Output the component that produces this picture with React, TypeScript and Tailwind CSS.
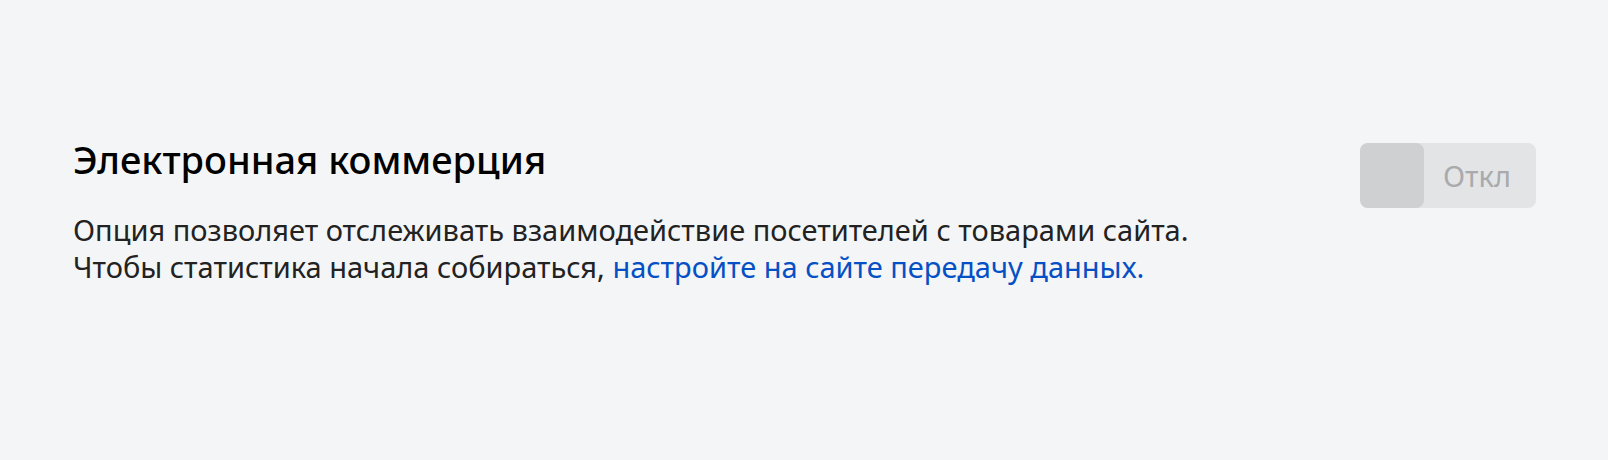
export default function App() {
  return (
    <div
      className="w-[1608px] h-[460px] bg-[#f4f5f7] flex justify-between items-start pl-[73px] pr-[72px] pt-[137px]"
      style={{ fontFamily: '"Noto Sans", Inter, sans-serif' }}
    >
      <div className="flex flex-col">
        <div className="text-[38px] leading-[44px] font-medium text-black">Электронная коммерция</div>
        <div className="mt-[30px] text-[29px] leading-[37px] text-[#222]">
          <div>Опция позволяет отслеживать взаимодействие посетителей с товарами сайта.</div>
          <div>
            Чтобы статистика начала собираться,{" "}
            <a className="text-[#0550c4]" href="#">настройте на сайте передачу данных.</a>
          </div>
        </div>
      </div>
      <div className="mt-[6px] flex h-[65px] w-[176px] rounded-[8px] bg-[#e3e4e6]">
        <div className="h-[65px] w-[64px] rounded-[8px] bg-[#cfd0d2]" />
        <div className="flex-1 flex items-center pl-[19px] text-[29px] text-[#a9aaab]">Откл</div>
      </div>
    </div>
  );
}
